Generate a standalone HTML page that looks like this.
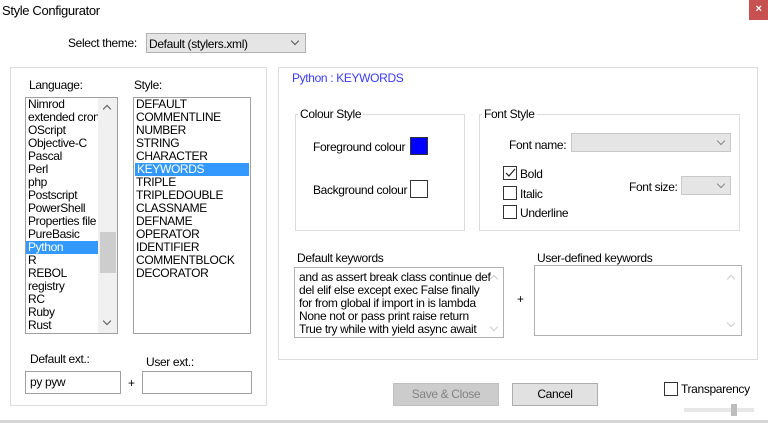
<!DOCTYPE html>
<html><head><meta charset="utf-8"><style>
*{margin:0;padding:0;box-sizing:border-box}
body{width:768px;height:423px;background:#fff;position:relative;overflow:hidden;font-family:"Liberation Sans",sans-serif;font-size:12px;color:#000;letter-spacing:-0.35px}
.a{position:absolute;white-space:nowrap}
.box{position:absolute;border:1px solid #dcdcdc}
.in{position:absolute;border:1px solid #a0a0a0;background:#fff}
.cb{position:absolute;background:#e5e5e5;border:1px solid #b0b0b0}
.row{height:13px;line-height:13px;padding-left:2px;white-space:nowrap;overflow:hidden}
.sel{background:#3399ff;color:#fff}
.chk{position:absolute;width:14px;height:14px;border:1px solid #333;background:#fff}
.arr{position:absolute;width:6px;height:6px;border-right:1px solid #555;border-bottom:1px solid #555;transform:rotate(45deg)}
</style></head><body>
<div class="a" style="left:2px;top:3px;font-size:13px">Style Configurator</div>
<div class="a" style="left:749px;top:0;width:19px;height:20px;background:#c75050;color:#fff;font-weight:bold;font-size:11px;text-align:center;line-height:18px">×</div>

<div class="a" style="left:68px;top:36px">Select theme:</div>
<div class="cb" style="left:146px;top:33px;width:160px;height:20px"><span class="a" style="left:2px;top:3px">Default (stylers.xml)</span><span class="arr" style="left:145px;top:4px"></span></div>

<div class="box" style="left:10px;top:67px;width:257px;height:339px"></div>
<div class="a" style="left:29px;top:78px">Language:</div>
<div class="a" style="left:134px;top:78px">Style:</div>
<div class="in" style="left:25px;top:97px;width:93px;height:237px;overflow:hidden">
<div style="position:absolute;left:0;top:0;width:72px">
<div class="row">Nimrod</div><div class="row">extended crontab</div><div class="row">OScript</div><div class="row">Objective-C</div><div class="row">Pascal</div><div class="row">Perl</div><div class="row">php</div><div class="row">Postscript</div><div class="row">PowerShell</div><div class="row">Properties file</div><div class="row">PureBasic</div><div class="row sel">Python</div><div class="row">R</div><div class="row">REBOL</div><div class="row">registry</div><div class="row">RC</div><div class="row">Ruby</div><div class="row">Rust</div>
</div>
<div style="position:absolute;left:72px;top:0;width:19px;height:235px;background:#f0f0f0"></div>
<div style="position:absolute;left:74px;top:134px;width:16px;height:41px;background:#cdcdcd"></div>
<span class="arr" style="left:78px;top:8px;transform:rotate(225deg)"></span>
<span class="arr" style="left:78px;top:220px"></span>
</div>
<div class="in" style="left:133px;top:97px;width:118px;height:237px;padding-top:0">
<div class="row">DEFAULT</div><div class="row">COMMENTLINE</div><div class="row">NUMBER</div><div class="row">STRING</div><div class="row">CHARACTER</div><div class="row sel" style="margin:0 1px">KEYWORDS</div><div class="row">TRIPLE</div><div class="row">TRIPLEDOUBLE</div><div class="row">CLASSNAME</div><div class="row">DEFNAME</div><div class="row">OPERATOR</div><div class="row">IDENTIFIER</div><div class="row">COMMENTBLOCK</div><div class="row">DECORATOR</div>
</div>
<div class="a" style="left:30px;top:352px">Default ext.:</div>
<div class="a" style="left:146px;top:355px">User ext.:</div>
<div class="in" style="left:25px;top:371px;width:96px;height:23px"><span class="a" style="left:4px;top:3px">py pyw</span></div>
<div class="a" style="left:128px;top:376px">+</div>
<div class="in" style="left:142px;top:371px;width:110px;height:23px"></div>

<div class="box" style="left:278px;top:67px;width:480px;height:293px"></div>
<div class="a" style="left:292px;top:71px;color:#3a3aff">Python : KEYWORDS</div>

<div class="box" style="left:295px;top:114px;width:170px;height:117px"></div>
<div class="a" style="left:298px;top:107px;background:#fff;padding:0 2px">Colour Style</div>
<div class="a" style="left:313px;top:140px">Foreground colour</div>
<div class="a" style="left:410px;top:137px;width:18px;height:18px;background:#0000ff;border:1px solid #333"></div>
<div class="a" style="left:313px;top:183px">Background colour</div>
<div class="a" style="left:410px;top:180px;width:18px;height:18px;background:#fff;border:1px solid #333"></div>

<div class="box" style="left:479px;top:114px;width:261px;height:117px"></div>
<div class="a" style="left:482px;top:107px;background:#fff;padding:0 2px">Font Style</div>
<div class="a" style="left:509px;top:138px">Font name:</div>
<div class="cb" style="left:571px;top:133px;width:160px;height:19px;border-color:#c8c8c8"><span class="arr" style="left:146px;top:4px;border-color:#888"></span></div>
<div class="chk" style="left:503px;top:166px"><svg width="12" height="12" style="position:absolute;left:0;top:0"><path d="M2 6 L5 9 L11 2" fill="none" stroke="#222" stroke-width="1.2"/></svg></div>
<div class="a" style="left:520px;top:167px">Bold</div>
<div class="chk" style="left:503px;top:186px"></div>
<div class="a" style="left:520px;top:187px">Italic</div>
<div class="chk" style="left:503px;top:205px"></div>
<div class="a" style="left:520px;top:206px">Underline</div>
<div class="a" style="left:629px;top:180px">Font size:</div>
<div class="cb" style="left:681px;top:176px;width:50px;height:19px;border-color:#c8c8c8"><span class="arr" style="left:36px;top:4px;border-color:#888"></span></div>

<div class="a" style="left:297px;top:251px">Default keywords</div>
<div class="in" style="left:294px;top:267px;width:210px;height:71px;border-color:#b0b0b0;line-height:13px;padding:3px 0 0 4px">and as assert break class continue def<br>del elif else except exec False finally<br>for from global if import in is lambda<br>None not or pass print raise return<br>True try while with yield async await
<span class="arr" style="left:196px;top:8px;transform:rotate(225deg);border-color:#ccc"></span><span class="arr" style="left:196px;top:56px;border-color:#ccc"></span></div>
<div class="a" style="left:517px;top:292px">+</div>
<div class="a" style="left:537px;top:251px">User-defined keywords</div>
<div class="in" style="left:534px;top:265px;width:208px;height:71px;border-color:#b0b0b0"><span class="arr" style="left:193px;top:10px;transform:rotate(225deg);border-color:#ccc"></span><span class="arr" style="left:193px;top:54px;border-color:#ccc"></span></div>

<div class="a" style="left:393px;top:383px;width:106px;height:23px;background:#cccccc;border:1px solid #bfbfbf;color:#838383;text-align:center;line-height:21px">Save &amp; Close</div>
<div class="a" style="left:512px;top:383px;width:86px;height:23px;background:#e1e1e1;border:1px solid #adadad;text-align:center;line-height:21px">Cancel</div>
<div class="chk" style="left:664px;top:382px"></div>
<div class="a" style="left:681px;top:382px">Transparency</div>
<div class="a" style="left:684px;top:408px;width:70px;height:4px;background:#e7e7e7"></div>
<div class="a" style="left:731px;top:404px;width:6px;height:12px;background:#bcbcbc"></div>
<div class="a" style="left:0;top:420px;width:768px;height:3px;background:#d6d6d6"></div>
</body></html>
